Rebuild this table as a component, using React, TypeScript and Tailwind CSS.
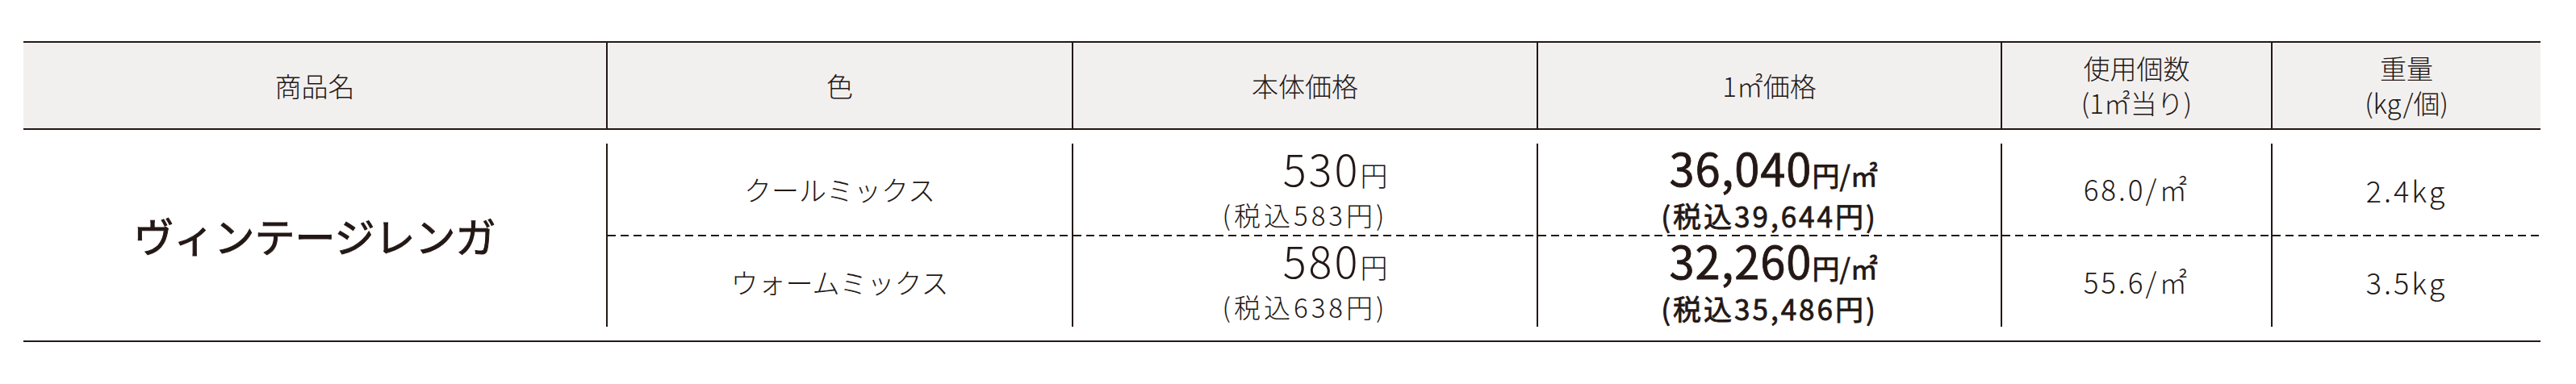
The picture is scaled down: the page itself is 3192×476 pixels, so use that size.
import React from "react";

const ink = "text-[#231815]";

type Row = {
  color: string;
  price: string;
  taxPrice: string;
  sqmPrice: string;
  sqmTax: string;
  count: string;
  weight: string;
};

const rows: Row[] = [
  {
    color: "クールミックス",
    price: "530",
    taxPrice: "583",
    sqmPrice: "36,040",
    sqmTax: "39,644",
    count: "68.0",
    weight: "2.4kg",
  },
  {
    color: "ウォームミックス",
    price: "580",
    taxPrice: "638",
    sqmPrice: "32,260",
    sqmTax: "35,486",
    count: "55.6",
    weight: "3.5kg",
  },
];

const dash =
  "h-[2px] w-full bg-[repeating-linear-gradient(90deg,#231815_0_10px,transparent_10px_16px)]";

function Column({
  width,
  cells,
}: {
  width: string;
  cells: React.ReactNode[];
}) {
  return (
    <div className={`${width} flex flex-col border-l-2 border-[#231815]`}>
      <div className="flex h-[113px] items-center justify-center">{cells[0]}</div>
      <div className={dash} />
      <div className="flex h-[112px] items-center justify-center">{cells[1]}</div>
    </div>
  );
}

function HeadCell({ width, first, children }: { width: string; first?: boolean; children: React.ReactNode }) {
  return (
    <div
      className={`${width} flex flex-col items-center justify-center text-center text-[33px] leading-[43px] font-light ${
        first ? "" : "border-l-2 border-[#231815]"
      }`}
    >
      {children}
    </div>
  );
}

export default function App() {
  return (
    <div
      className={`h-[476px] w-[3192px] bg-white pl-[29px] pt-[51px] font-['Noto_Sans_CJK_JP',sans-serif] ${ink}`}
    >
      <div className="w-[3119px] border-y-2 border-[#231815]">
        {/* header */}
        <div className="flex h-[108px] border-b-2 border-[#231815] bg-[#f2f0ef]">
          <HeadCell width="w-[722px]" first>
            商品名
          </HeadCell>
          <HeadCell width="w-[577px]">色</HeadCell>
          <HeadCell width="w-[576px]">本体価格</HeadCell>
          <HeadCell width="w-[575px]">1㎡価格</HeadCell>
          <HeadCell width="w-[335px]">
            <span>使用個数</span>
            <span>(1㎡当り)</span>
          </HeadCell>
          <HeadCell width="w-[334px]">
            <span>重量</span>
            <span>(kg/個)</span>
          </HeadCell>
        </div>

        {/* body */}
        <div className="flex py-[17px]">
          <div className="flex w-[722px] items-center justify-center text-[50px] font-normal [-webkit-text-stroke:1px_#231815]">
            ヴィンテージレンガ
          </div>
          <Column
            width="w-[577px]"
            cells={rows.map((r) => (
              <span key={r.color} className="text-[34px] font-light">
                {r.color}
              </span>
            ))}
          />
          <Column
            width="w-[576px]"
            cells={rows.map((r) => (
              <div key={r.price} className="flex flex-col items-end font-light">
                <div className="leading-[46px]">
                  <span className="text-[54px] leading-[46px] tracking-[3px]">{r.price}</span>
                  <span className="text-[34px] leading-[46px]">円</span>
                </div>
                <div className="text-[33px] leading-[38px] tracking-[4px]">(税込{r.taxPrice}円)</div>
              </div>
            ))}
          />
          <Column
            width="w-[575px]"
            cells={rows.map((r) => (
              <div
                key={r.sqmPrice}
                className="flex flex-col items-end font-normal [-webkit-text-stroke:0.8px_#231815]"
              >
                <div className="leading-[48px]">
                  <span className="text-[56px] leading-[48px] tracking-[1px]">{r.sqmPrice}</span>
                  <span className="text-[34px] leading-[48px]">円/㎡</span>
                </div>
                <div className="text-[35px] leading-[38px] tracking-[3px]">(税込{r.sqmTax}円)</div>
              </div>
            ))}
          />
          <Column
            width="w-[335px]"
            cells={rows.map((r) => (
              <span key={r.count} className="text-[35px] font-light tracking-[3px]">
                {r.count}/㎡
              </span>
            ))}
          />
          <Column
            width="w-[334px]"
            cells={rows.map((r) => (
              <span key={r.weight} className="text-[36px] font-light tracking-[3px]">
                {r.weight}
              </span>
            ))}
          />
        </div>
      </div>
    </div>
  );
}
